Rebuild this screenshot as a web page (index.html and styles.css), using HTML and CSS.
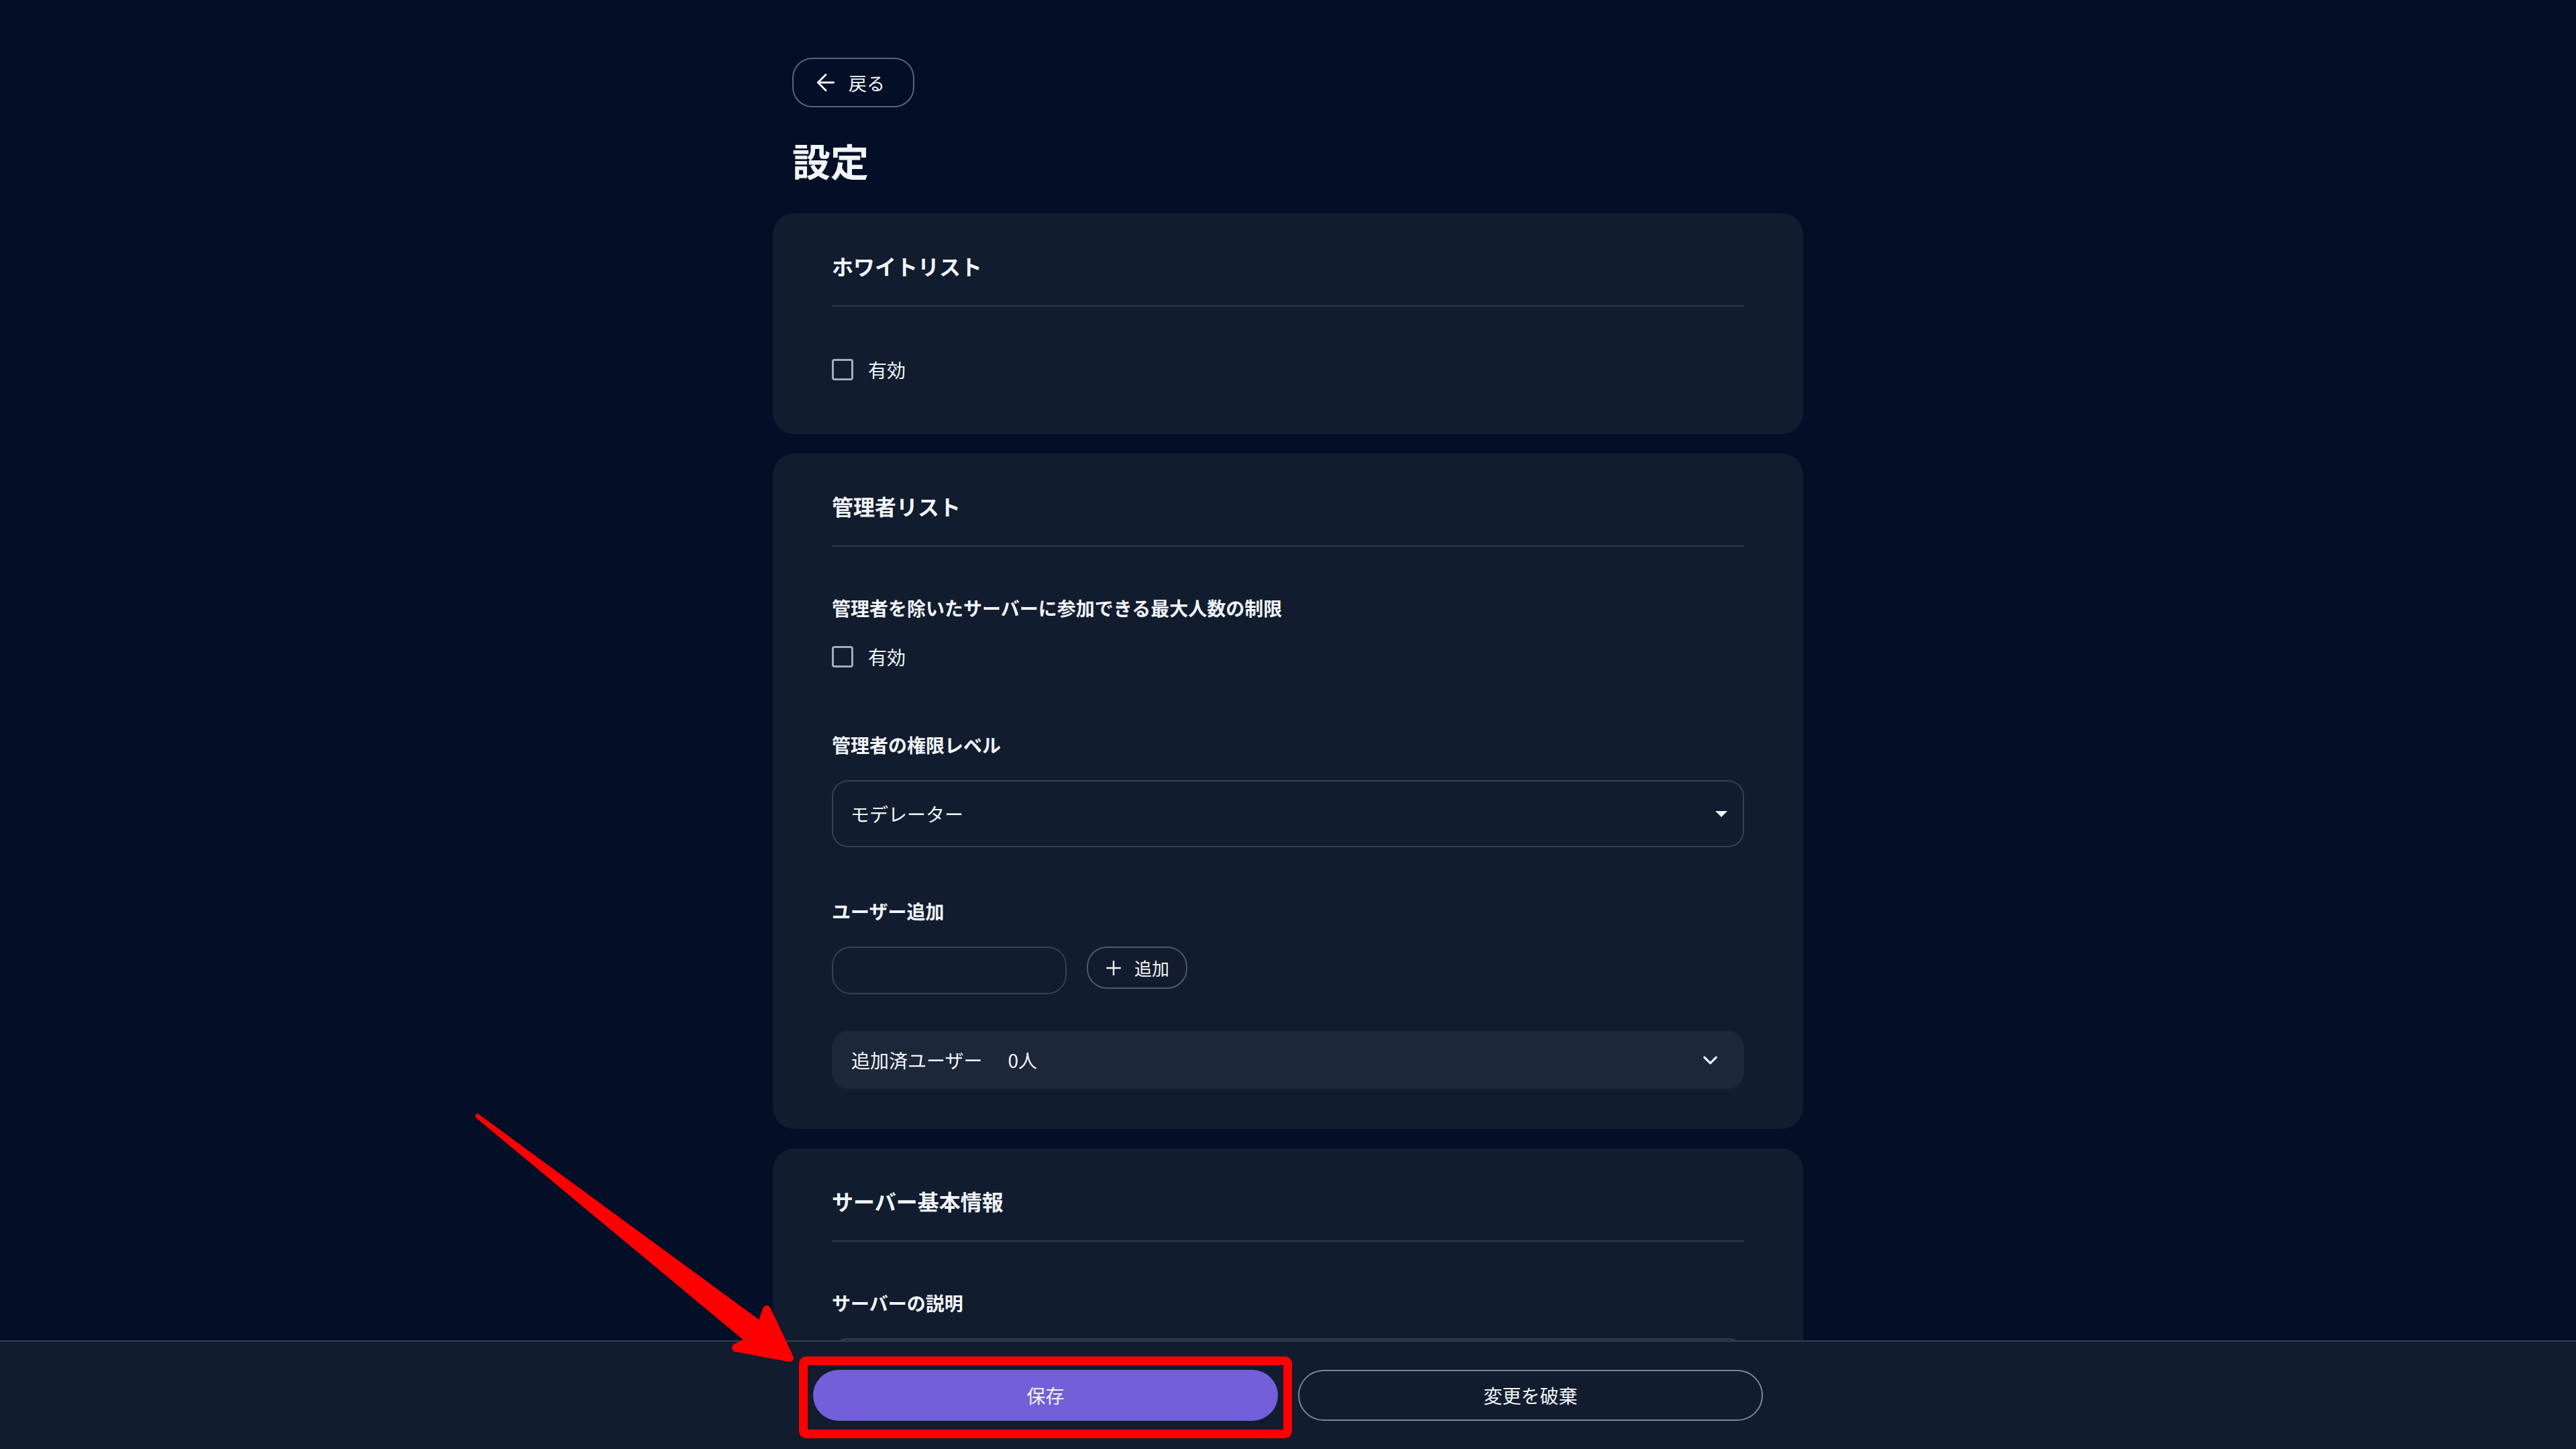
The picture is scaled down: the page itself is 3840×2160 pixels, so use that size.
FILE: index.html
```html
<!DOCTYPE html>
<html lang="ja">

<head>
    <meta charset="UTF-8">
    <meta name="viewport" content="width=device-width, initial-scale=1.0">
    <title>設定</title>
    <link rel="stylesheet" href="styles.css">
</head>

<body>
    <main class="page">
        <div class="page-head">
            <button class="back-btn" type="button">
                <svg width="40" height="40" viewBox="0 0 24 24" fill="none" stroke="currentColor" stroke-width="1.7" stroke-linecap="round" stroke-linejoin="round">
                    <path d="m12 19-7-7 7-7" />
                    <path d="M19 12H5" />
                </svg>
                <span>戻る</span>
            </button>
            <h1>設定</h1>
        </div>

        <!-- Whitelist -->
        <section class="card">
            <h2 class="card-title">ホワイトリスト</h2>
            <div class="card-body">
                <label class="check-row">
                    <input type="checkbox">
                    <span>有効</span>
                </label>
            </div>
        </section>

        <!-- Admin list -->
        <section class="card">
            <h2 class="card-title">管理者リスト</h2>
            <div class="card-body">
                <div class="field">
                    <div class="field-label short">管理者を除いたサーバーに参加できる最大人数の制限</div>
                    <label class="check-row">
                        <input type="checkbox">
                        <span>有効</span>
                    </label>
                </div>

                <div class="field">
                    <div class="field-label">管理者の権限レベル</div>
                    <div class="select-wrap">
                        <select>
                            <option>モデレーター</option>
                            <option>管理者</option>
                        </select>
                        <svg class="caret" width="18" height="9" viewBox="0 0 18 9">
                            <path d="M0 0h18L9 9z" fill="#f1f5f9" />
                        </svg>
                    </div>
                </div>

                <div class="field">
                    <div class="field-label">ユーザー追加</div>
                    <div class="add-row">
                        <input type="text" class="text-input">
                        <button class="add-btn" type="button">
                            <svg width="22" height="22" viewBox="0 0 22 22" fill="none" stroke="currentColor" stroke-width="2.4" stroke-linecap="round">
                                <path d="M11 1v20" />
                                <path d="M1 11h20" />
                            </svg>
                            <span>追加</span>
                        </button>
                    </div>
                </div>

                <div class="user-list">
                    <div>追加済ユーザー<span class="count">0人</span></div>
                    <svg width="35" height="35" viewBox="0 0 24 24" fill="none" stroke="currentColor" stroke-width="2.2" stroke-linecap="round" stroke-linejoin="round">
                        <path d="m6 9 6 6 6-6" />
                    </svg>
                </div>
            </div>
        </section>

        <!-- Server info -->
        <section class="card">
            <h2 class="card-title">サーバー基本情報</h2>
            <div class="card-body">
                <div class="field-label">サーバーの説明</div>
                <textarea class="text-area"></textarea>
            </div>
        </section>
    </main>

    <footer class="action-bar">
        <div class="action-inner">
            <button class="btn-save" type="button">保存</button>
            <button class="btn-discard" type="button">変更を破棄</button>
        </div>
    </footer>

    <!-- annotation drawn over the screenshot -->
    <svg class="annotation" width="3840" height="2160" viewBox="0 0 3840 2160">
        <polygon points="711,1659 1138,1972 1116,2004 708,1665" fill="#ff0000" />
        <polygon points="1134,1978 1143,1952 1177,2024 1097,2009 1113,2001" fill="#ff0000" stroke="#ff0000" stroke-width="12" stroke-linejoin="round" />
        <rect x="1197.5" y="2028.5" width="722" height="109" rx="4" fill="none" stroke="#ff0000" stroke-width="13" />
    </svg>
</body>

</html>
```

FILE: styles.css
```css
html,
body {
    margin: 0;
    height: 100%;
}

body {
    overflow: hidden;
    background-color: #020f26;
    color: #f1f5f9;
    font-family: "Noto Sans CJK JP", "Noto Sans", sans-serif;
}

button,
input,
select,
textarea {
    font-family: inherit;
    color: inherit;
}

.page {
    width: 1536px;
    margin: 0 auto;
    padding-top: 86px;
}

.page-head {
    padding: 0 29px;
}

.back-btn {
    display: inline-flex;
    align-items: center;
    gap: 14px;
    height: 74px;
    padding: 0 42px 0 28px;
    background: transparent;
    border: 2px solid #5b6576;
    border-radius: 30px;
    font-size: 27px;
    cursor: pointer;
}

h1 {
    margin: 36px 0 0;
    font-size: 57px;
    line-height: 84px;
    font-weight: 700;
}

.card {
    margin-top: 38px;
    padding: 54px 88px 60px;
    background-color: #111c2e;
    border-radius: 32px;
}

.card + .card {
    margin-top: 29px;
}

.card-title {
    margin: 0;
    padding-bottom: 35px;
    border-bottom: 2px solid #2f3a4b;
    font-size: 32px;
    line-height: 48px;
    font-weight: 700;
}

.card-body {
    padding-top: 70px;
}

.field + .field {
    margin-top: 74px;
}

.field-label {
    margin-bottom: 32px;
    font-size: 28px;
    line-height: 42px;
    font-weight: 700;
}

.field-label.short {
    margin-bottom: 28px;
}

.check-row {
    display: flex;
    align-items: center;
    gap: 22px;
    height: 48px;
    padding-bottom: 12px;
    font-size: 28px;
    cursor: pointer;
}

.check-row input {
    appearance: none;
    margin: 0;
    width: 32px;
    height: 32px;
    border: 3px solid #a3adba;
    border-radius: 4px;
    background: transparent;
}

.select-wrap {
    position: relative;
}

.select-wrap select {
    appearance: none;
    display: block;
    width: 100%;
    height: 100px;
    padding: 0 26px;
    background: transparent;
    border: 2px solid #354153;
    border-radius: 24px;
    font-size: 28px;
}

.select-wrap .caret {
    position: absolute;
    right: 25px;
    top: 46px;
    pointer-events: none;
}

.add-row {
    display: flex;
    align-items: flex-start;
    gap: 30px;
}

.text-input {
    box-sizing: border-box;
    width: 350px;
    height: 71px;
    padding: 0 20px;
    background: transparent;
    border: 2px solid #354153;
    border-radius: 28px;
    font-size: 28px;
}

.add-btn {
    display: inline-flex;
    align-items: center;
    gap: 20px;
    box-sizing: border-box;
    width: 150px;
    height: 63px;
    padding: 0 0 0 27px;
    background: transparent;
    border: 2px solid #4e5869;
    border-radius: 30px;
    font-size: 26px;
    cursor: pointer;
}

.user-list {
    display: flex;
    align-items: center;
    justify-content: space-between;
    height: 86px;
    margin-top: 55px;
    padding: 0 33px 0 29px;
    background-color: #1c2739;
    border-radius: 24px;
    font-size: 28px;
}

.count {
    margin-left: 38px;
}

.text-area {
    display: block;
    box-sizing: border-box;
    width: 100%;
    height: 240px;
    background: transparent;
    border: 2px solid #354153;
    border-radius: 24px;
    resize: none;
}

.action-bar {
    position: fixed;
    left: 0;
    right: 0;
    bottom: 0;
    height: 160px;
    background-color: #111c2e;
    border-top: 2px solid #334052;
}

.action-inner {
    display: grid;
    grid-template-columns: 1fr 1fr;
    gap: 30px;
    width: 1416px;
    margin: 42px auto 0;
}

.btn-save,
.btn-discard {
    height: 76px;
    border-radius: 38px;
    font-size: 28px;
    cursor: pointer;
}

.btn-save {
    background-color: #735fd8;
    border: none;
}

.btn-discard {
    background: transparent;
    border: 2px solid #7b8597;
}

.annotation {
    position: absolute;
    top: 0;
    left: 0;
    pointer-events: none;
}
```
